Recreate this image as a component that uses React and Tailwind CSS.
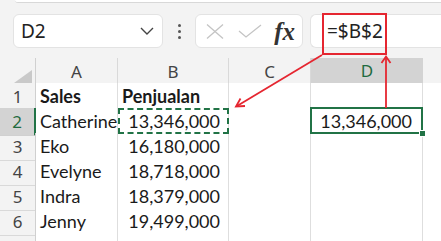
import React from 'react';

const ui = { fontFamily: '"Noto Sans", "Open Sans", sans-serif' };
const cell = { fontFamily: 'Lato, "Liberation Sans", sans-serif' };

const rows = [
  ['1', 'Sales', 'Penjualan', '', ''],
  ['2', 'Catherine', '13,346,000', '', '13,346,000'],
  ['3', 'Eko', '16,180,000', '', ''],
  ['4', 'Evelyne', '18,718,000', '', ''],
  ['5', 'Indra', '18,379,000', '', ''],
  ['6', 'Jenny', '19,499,000', '', ''],
  ['', '', '', '', ''],
];

function Toolbar() {
  return (
    <div className="flex items-center h-[34px] mt-[11px] pl-[13px] gap-0">
      {/* name box */}
      <div className="flex items-center w-[150px] h-[34px] bg-white border border-[#e3e3e3] rounded-[6px] pl-[7px] pr-[8px]">
        <span className="flex-1 text-[19px] text-[#222]" style={ui}>D2</span>
        <svg width="14" height="8" viewBox="0 0 14 8">
          <path d="M1 1 L7 7 L13 1" fill="none" stroke="#444" strokeWidth="1.4" />
        </svg>
      </div>
      {/* vertical dots */}
      <div className="flex flex-col items-center justify-center gap-[3px] w-[32px]">
        <span className="w-[3px] h-[3px] rounded-full bg-[#555]" />
        <span className="w-[3px] h-[3px] rounded-full bg-[#555]" />
        <span className="w-[3px] h-[3px] rounded-full bg-[#555]" />
      </div>
      {/* cancel / enter / fx */}
      <div className="flex items-center w-[108px] h-[34px] bg-white border border-[#e3e3e3] rounded-[6px] pl-[10px] pr-[7px]">
        <svg width="18" height="15" viewBox="0 0 18 15">
          <path d="M1 0.5 L17 14.5 M17 0.5 L1 14.5" stroke="#c4c4c4" strokeWidth="1.3" />
        </svg>
        <svg className="ml-[14px]" width="24" height="14" viewBox="0 0 24 14">
          <path d="M1 7 L8 13 L23 1" fill="none" stroke="#c4c4c4" strokeWidth="1.3" />
        </svg>
        <span
          className="ml-auto text-[25px] italic font-bold leading-none text-[#333]"
          style={{ fontFamily: '"Liberation Serif", serif' }}
        >
          fx
        </span>
      </div>
      {/* formula input */}
      <div className="flex items-center flex-1 ml-[7px] h-[34px] bg-white border border-[#e3e3e3] rounded-l-[6px] border-r-0 pl-[16px]">
        <span className="text-[19px] text-[#222]" style={ui}>=$B$2</span>
      </div>
    </div>
  );
}

function Grid() {
  const cols = 'grid grid-cols-[36px_82px_111px_82px_112px_1fr]';
  return (
    <div className="mt-[10px]">
      {/* column headers */}
      <div className={`${cols} h-[25px] text-[17px] text-[#444]`} style={ui}>
        <div className="relative border-r border-[#d0d0d0]">
          <svg className="absolute right-[3px] bottom-[3px]" width="18" height="13" viewBox="0 0 18 13">
            <path d="M18 0 L18 13 L0 13 Z" fill="#c9c9c9" />
          </svg>
        </div>
        {['A', 'B', 'C'].map((c) => (
          <div key={c} className="flex items-center justify-center border-r border-[#d9d9d9] border-b border-b-[#e0e0e0]">
            {c}
          </div>
        ))}
        <div className="flex items-center justify-center bg-[#d3d3d3] border-b-2 border-[#217346] text-[#1f6b40]">D</div>
        <div className="border-b border-[#e0e0e0]" />
      </div>
      {rows.map((r, i) => (
        <div key={i} className={`${cols} h-[25px]`}>
          <div
            className={
              i === 1
                ? 'flex items-center justify-center bg-[#d3d3d3] border-r-2 border-r-[#217346] border-b border-b-[#d0d0d0] text-[17px] text-[#1f6b40]'
                : 'flex items-center justify-center border-r border-r-[#d0d0d0] border-b border-b-[#d9d9d9] text-[17px] text-[#444]'
            }
            style={ui}
          >
            {r[0]}
          </div>
          <div
            className={`flex items-center pl-[4px] bg-white border-r border-b border-[#dedede] text-[18px] text-[#1a1a1a] whitespace-nowrap ${i === 0 ? 'font-bold' : ''}`}
            style={cell}
          >
            {r[1]}
          </div>
          <div
            className={`flex items-center bg-white border-r border-b border-[#dedede] text-[18px] text-[#1a1a1a] tabular-nums whitespace-nowrap ${i === 0 ? 'font-bold pl-[4px]' : 'justify-end pr-[8px]'}`}
            style={cell}
          >
            {r[2]}
          </div>
          <div className="bg-white border-r border-b border-[#dedede]" />
          <div
            className="flex items-center justify-end pr-[10px] bg-white border-r border-b border-[#dedede] text-[18px] text-[#1a1a1a] tabular-nums"
            style={cell}
          >
            {r[4]}
          </div>
          <div className="bg-white border-b border-[#dedede]" />
        </div>
      ))}
    </div>
  );
}

export default function App() {
  return (
    <div className="relative w-[441px] h-[241px] overflow-hidden bg-[#f3f3f3]">
      <div className="ml-[15px] h-[3px] bg-white border-b border-[#d8d8d8] rounded-bl-[4px]" />
      <Toolbar />
      <Grid />

      {/* selection marks */}
      <div className="absolute left-[118px] top-[108px] w-[111px] h-[26px] border-2 border-dashed border-[#217346]" />
      <div className="absolute left-[310px] top-[107px] w-[113px] h-[27px] border-2 border-[#217346]" />
      <div className="absolute left-[419px] top-[130px] w-[7px] h-[7px] bg-[#217346] border border-white" />

      {/* annotation */}
      <svg className="absolute inset-0 pointer-events-none" width="441" height="241" viewBox="0 0 441 241">
        <rect x="323" y="14" width="63" height="40" fill="none" stroke="#e52630" strokeWidth="2" />
        <path d="M322 55 L237 106" stroke="#e52630" strokeWidth="1.8" fill="none" />
        <path d="M245 106 L236 106.5 L240.5 98.5" stroke="#e52630" strokeWidth="1.8" fill="none" />
        <path d="M386 108 L386 57" stroke="#e52630" strokeWidth="1.8" fill="none" />
        <path d="M381.5 63 L386 56.5 L390.5 63" stroke="#e52630" strokeWidth="1.8" fill="none" />
      </svg>
    </div>
  );
}
